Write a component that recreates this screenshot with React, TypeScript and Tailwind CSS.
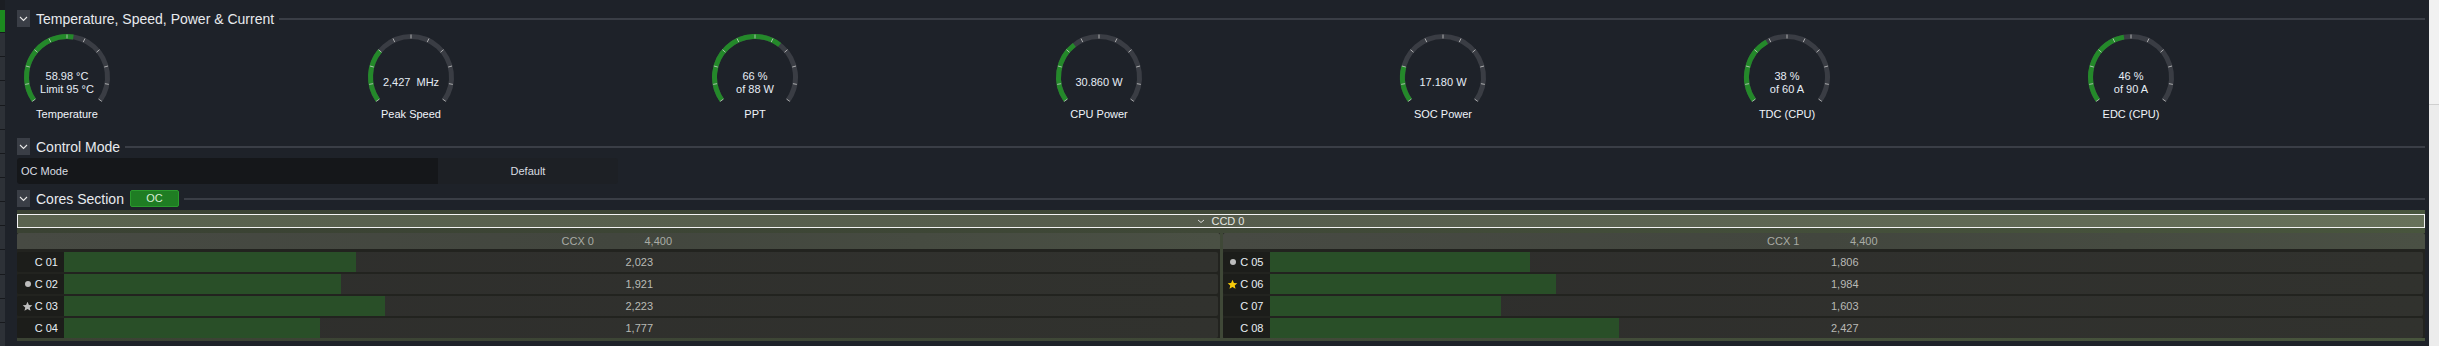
import { Fragment } from 'react';

type Gauge = { label: string; lines: string[]; fill: number };

const gauges: Gauge[] = [
  { label: 'Temperature', lines: ['58.98 °C', 'Limit 95 °C'], fill: 0.536 },
  { label: 'Peak Speed', lines: ['2,427  MHz'], fill: 0.3 },
  { label: 'PPT', lines: ['66 %', 'of 88 W'], fill: 0.65 },
  { label: 'CPU Power', lines: ['30.860 W'], fill: 0.35 },
  { label: 'SOC Power', lines: ['17.180 W'], fill: 0.2 },
  { label: 'TDC (CPU)', lines: ['38 %', 'of 60 A'], fill: 0.38 },
  { label: 'EDC (CPU)', lines: ['46 %', 'of 90 A'], fill: 0.46 },
];

type Core = { name: string; value: number; mark?: 'dot' | 'star' | 'gold' };

const ccx: { name: string; cores: Core[] }[] = [
  {
    name: 'CCX 0',
    cores: [
      { name: 'C 01', value: 2023 },
      { name: 'C 02', value: 1921, mark: 'dot' },
      { name: 'C 03', value: 2223, mark: 'star' },
      { name: 'C 04', value: 1777 },
    ],
  },
  {
    name: 'CCX 1',
    cores: [
      { name: 'C 05', value: 1806, mark: 'dot' },
      { name: 'C 06', value: 1984, mark: 'gold' },
      { name: 'C 07', value: 1603 },
      { name: 'C 08', value: 2427 },
    ],
  },
];

// gauge geometry
const R = 40.5;
const CX = 50;
const CY = 47;

const pt = (deg: number, r = R) => {
  const a = (deg * Math.PI) / 180;
  return [CX + r * Math.sin(a), CY - r * Math.cos(a)];
};

const arc = (a0: number, a1: number) => {
  const [x0, y0] = pt(a0);
  const [x1, y1] = pt(a1);
  const large = a1 - a0 > 180 ? 1 : 0;
  return `M${x0} ${y0} A${R} ${R} 0 ${large} 1 ${x1} ${y1}`;
};

const ticks = Array.from({ length: 11 }, (_, i) => -125 + i * 25);

const Chevron = () => (
  <div className="flex h-[17px] w-[13px] items-center justify-center bg-[#3a3e46]">
    <svg width="9" height="6" viewBox="0 0 9 6">
      <path d="M1 1l3.5 3.5L8 1" fill="none" stroke="#e8e8e8" strokeWidth="1.1" />
    </svg>
  </div>
);

const SectionHeader = ({ title, badge }: { title: string; badge?: string }) => (
  <div className="flex h-[17px] items-center">
    <Chevron />
    <span className="ml-[6px] text-[14px] leading-none text-[#e8eaee]">{title}</span>
    {badge && (
      <span className="ml-[6px] flex h-[17px] w-[49px] items-center justify-center rounded-[2px] border border-[#2a9a2e] bg-[#1f7d23] text-[11px] text-[#d6ecd6]">
        {badge}
      </span>
    )}
    <div className="ml-[5px] h-[2px] flex-1 bg-[#3a3e46]" />
  </div>
);

const GaugeItem = ({ g }: { g: Gauge }) => {
  const end = -125 + 250 * g.fill;
  return (
    <div className="w-[100px]">
      <div className="relative h-[75px] w-[100px]">
        <svg width="100" height="75" viewBox="0 0 100 75">
          <path d={arc(-125, 125)} fill="none" stroke="#3a3d44" strokeWidth="5" />
          <path d={arc(-125, end)} fill="none" stroke="#24892a" strokeWidth="5" />
          {ticks.map((t) => {
            const [x0, y0] = pt(t, R - 2);
            const [x1, y1] = pt(t, R + 2);
            return <line key={t} x1={x0} y1={y0} x2={x1} y2={y1} stroke="#d4d4d4" strokeOpacity="0.75" strokeWidth="1" />;
          })}
        </svg>
        <div
          className={`absolute left-0 right-0 text-center text-[11px] leading-[13px] whitespace-pre text-[#e6edf5] ${
            g.lines.length > 1 ? 'top-[40px]' : 'top-[46px]'
          }`}
        >
          {g.lines.map((l) => (
            <div key={l}>{l}</div>
          ))}
        </div>
      </div>
      <div className="mt-[2px] text-center text-[11px] leading-[14px] text-[#f0f4fa]">{g.label}</div>
    </div>
  );
};

const Mark = ({ mark }: { mark?: Core['mark'] }) => {
  if (mark === 'dot') return <span className="mr-[4px] inline-block h-[6px] w-[6px] rounded-full bg-[#bdbdbd]" />;
  if (mark === 'star' || mark === 'gold')
    return (
      <svg width="11" height="11" viewBox="0 0 24 24" className="mr-[2px]">
        <path
          d="M12 1.5l3.1 7 7.4.6-5.6 4.9 1.7 7.4L12 17.5l-6.6 3.9 1.7-7.4L1.5 9.1l7.4-.6z"
          fill={mark === 'gold' ? '#f7cb0a' : '#bdbdbd'}
        />
      </svg>
    );
  return null;
};

const CcxColumn = ({ name, cores }: { name: string; cores: Core[] }) => (
  <div className="flex flex-col bg-[#22231f]">
    <div className="flex h-[16px] items-center rounded-t-[2px] bg-linear-to-r from-[#474a43] via-[#42463e] to-[#4a5044] text-[11px] text-[#a9aca5]">
      <span className="w-[577px] text-right">{name}</span>
      <span className="w-[78px] text-right">4,400</span>
    </div>
    <div className="mt-[3px] flex flex-col gap-[2px] pr-[2px]">
      {cores.map((c) => (
        <div key={c.name} className="flex h-[20px] overflow-hidden rounded-[2px]">
          <div className="flex w-[47px] shrink-0 items-center justify-end bg-[#1c1d1a] pr-[6px] text-[11px] text-[#e8eef5]">
            <Mark mark={c.mark} />
            {c.name}
          </div>
          <div className="relative flex-1 bg-linear-to-r from-[#2e2e2c] to-[#31322e]">
            <div className="h-full bg-[#294f28]" style={{ width: `${(c.value / 8000) * 100}%` }} />
            <div className="absolute inset-y-0 left-0 flex w-[589px] items-center justify-end text-[11px] text-[#b9bab6]">
              {c.value.toLocaleString('en-US')}
            </div>
          </div>
        </div>
      ))}
    </div>
  </div>
);

export default function App() {
  return (
    <div className="flex h-[346px] w-[2439px] overflow-hidden bg-[#1e2229] font-['Liberation_Sans',Arial,sans-serif]">
      {/* left tab strip */}
      <div className="flex w-[5px] shrink-0 flex-col bg-[#1b1e23] pt-[10px]">
        <div className="h-[23px] bg-[#1c8a1f]" />
        {Array.from({ length: 13 }, (_, i) => (
          <Fragment key={i}>
            <div className="h-[1px] bg-[#17191d]" />
            <div className="h-[24px] bg-[#2d3137]" />
          </Fragment>
        ))}
      </div>

      <div className="w-[2420px] shrink-0 pl-[12px] pt-[10px]">
        <SectionHeader title="Temperature, Speed, Power & Current" />
        <div className="mt-[3px] grid grid-cols-7">
          {gauges.map((g) => (
            <GaugeItem key={g.label} g={g} />
          ))}
        </div>

        <div className="mt-[17px]">
          <SectionHeader title="Control Mode" />
        </div>
        <div className="mt-[3px] flex h-[26px] w-[601px] overflow-hidden rounded-[3px] text-[11px] text-[#d9dde2]">
          <div className="flex w-[421px] items-center bg-[#15171a] pl-[4px]">OC Mode</div>
          <div className="flex flex-1 items-center justify-center bg-[#1d2025]">Default</div>
        </div>

        <div className="mt-[6px]">
          <SectionHeader title="Cores Section" badge="OC" />
        </div>

        <div className="mt-[3px] bg-linear-to-r from-[#3a4233] via-[#3f4837] to-[#48553d] px-0 pb-[3px] pt-[4px]">
          <div className="flex h-[14px] items-center justify-center border border-[#f2f2f2] bg-linear-to-r from-[#5a634f] via-[#555c4c] to-[#67715a] text-[11px] text-[#e6e8e2]">
            <svg width="8" height="5" viewBox="0 0 8 5" className="mr-[6px]">
              <path d="M1 1l3 2.5L7 1" fill="none" stroke="#d8d8d8" strokeWidth="1" />
            </svg>
            CCD 0
          </div>
          <div className="mt-[5px] grid grid-cols-2 gap-[3px]">
            {ccx.map((c) => (
              <CcxColumn key={c.name} name={c.name} cores={c.cores} />
            ))}
          </div>
        </div>
      </div>

      {/* scrollbar */}
      <div className="ml-[4px] flex w-[10px] shrink-0 flex-col bg-[#ececec]">
        <div className="h-[104px] bg-[#f1f1f1]" />
        <div className="h-[1px] bg-[#cfcfcf]" />
      </div>
    </div>
  );
}
